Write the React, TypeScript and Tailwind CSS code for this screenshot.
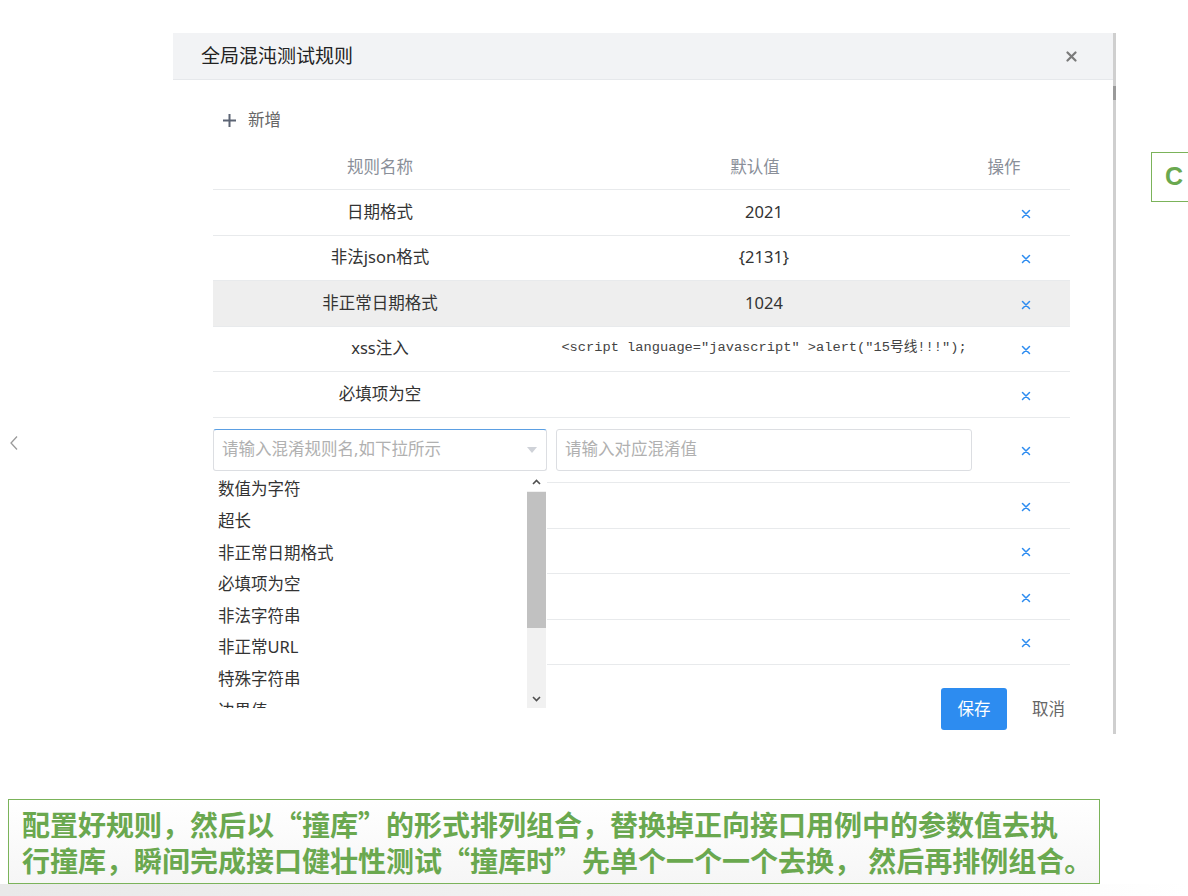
import React from "react";

const BlueX = () => (
  <svg width="10" height="10" viewBox="0 0 10 10">
    <path d="M1.5 1.5L8.5 8.5M8.5 1.5L1.5 8.5" stroke="#2d8cf0" strokeWidth="1.5" strokeLinecap="round" />
  </svg>
);

const rows = [
  { name: "日期格式", val: "2021" },
  { name: "非法json格式", val: "{2131}" },
  { name: "非正常日期格式", val: "1024", hl: true },
  { name: "xss注入", val: '<script language="javascript" >alert("15号线!!!");', mono: true },
  { name: "必填项为空", val: "" },
];

const options = ["数值为字符", "超长", "非正常日期格式", "必填项为空", "非法字符串", "非正常URL", "特殊字符串", "边界值"];

export default function App() {
  return (
    <div className="w-[1188px] h-[896px] overflow-hidden bg-white flex flex-col [font-family:'Noto_Sans','Noto_Sans_CJK_SC',sans-serif]">
      <div className="flex items-start pt-[33px] shrink-0">
        {/* left chevron column */}
        <div className="w-[173px] shrink-0 pt-[402px] pl-[9px]">
          <svg width="10" height="16" viewBox="0 0 10 16">
            <path d="M8 1.5L2 8L8 14.5" stroke="#9a9a9a" strokeWidth="1.3" fill="none" />
          </svg>
        </div>

        {/* modal */}
        <div className="w-[940px] shrink-0 flex flex-col">
          <div className="h-[47px] bg-[#f2f3f5] border-b border-[#e6e8eb] flex items-center justify-between pl-[28px] pr-[36px]">
            <span className="text-[19px] text-[#222]">全局混沌测试规则</span>
            <svg width="11" height="11" viewBox="0 0 11 11">
              <path d="M1.5 1.5L9.5 9.5M9.5 1.5L1.5 9.5" stroke="#7a7a7a" strokeWidth="2.2" strokeLinecap="round" />
            </svg>
          </div>
          <div className="pt-[28px] pl-[40px] pr-[43px] flex flex-col">
            <div className="h-[24px] flex items-center pl-[9px] gap-[11px] text-[16.5px] text-[#666]">
              <svg width="15" height="15" viewBox="0 0 15 15">
                <path d="M7.5 1V14M1 7.5H14" stroke="#5c6474" strokeWidth="2" />
              </svg>
              <span>新增</span>
            </div>
            <div className="mt-[13px] h-[44px] border-b border-[#e8eaec] flex items-center text-[16.5px] text-[#8a8f99] box-content">
              <div className="w-[334px] text-center">规则名称</div>
              <div className="w-[416px] text-center">默认值</div>
              <div className="w-[82px] text-center">操作</div>
            </div>
            <div className="relative">
              {rows.map((r, i) => (
                <div
                  key={i}
                  className={`h-[44.5px] box-content border-b border-[#e8eaec] flex items-center text-[16.5px] text-[#333] ${r.hl ? "bg-[#eeeeee]" : ""}`}
                >
                  <div className="w-[334px] text-center">{r.name}</div>
                  <div
                    className={`w-[434px] text-center whitespace-nowrap ${r.mono ? "[font-family:'Liberation_Mono','Noto_Sans_CJK_SC',monospace] text-[13.7px] text-[#444]" : ""}`}
                  >
                    {r.val}
                  </div>
                  <div className="flex-1 flex justify-center pt-[3px]">
                    <BlueX />
                  </div>
                </div>
              ))}
              {/* input row */}
              <div className="h-[64.5px] box-content border-b border-[#e8eaec] flex items-center">
                <div className="w-[334px] h-[42px] border border-[#dcdee2] border-t-[#5b9fe3] rounded-[3px] flex items-center justify-between pl-[8px] pr-[9px]">
                  <span className="text-[16.5px] text-[#b0b0b0]">请输入混淆规则名,如下拉所示</span>
                  <svg width="10" height="6" viewBox="0 0 10 6">
                    <path d="M0 0H10L5 6Z" fill="#cfd2d8" />
                  </svg>
                </div>
                <div className="w-[434px] px-[9px]">
                  <div className="h-[42px] border border-[#dcdee2] rounded-[3px] flex items-center pl-[8px] text-[16.5px] text-[#b0b0b0]">
                    请输入对应混淆值
                  </div>
                </div>
                <div className="flex-1 flex justify-center pt-[3px]">
                  <BlueX />
                </div>
              </div>
              {[0, 1, 2, 3].map((i) => (
                <div key={i} className="h-[44.5px] box-content border-b border-[#e8eaec] flex items-center">
                  <div className="w-[334px]" />
                  <div className="w-[434px]" />
                  <div className="flex-1 flex justify-center pt-[3px]">
                    <BlueX />
                  </div>
                </div>
              ))}

              {/* dropdown */}
              <div className="absolute left-0 top-[282px] w-[334px] h-[236px] bg-white flex overflow-hidden">
                <div className="flex-1 pt-[2px] pl-[5px] flex flex-col">
                  {options.map((o) => (
                    <div key={o} className="h-[31.6px] shrink-0 flex items-center text-[16.5px] text-[#333]">
                      {o}
                    </div>
                  ))}
                </div>
                <div className="w-[19px] shrink-0 flex flex-col bg-[#f1f1f1] mr-[1px]">
                  <div className="h-[19px] bg-white flex items-center justify-center">
                    <svg width="9" height="6" viewBox="0 0 9 6">
                      <path d="M1 5L4.5 1.5L8 5" stroke="#505050" strokeWidth="1.6" fill="none" />
                    </svg>
                  </div>
                  <div className="h-[136px] bg-[#c1c1c1] mt-[1px]" />
                  <div className="flex-1" />
                  <div className="h-[18px] flex items-center justify-center">
                    <svg width="9" height="6" viewBox="0 0 9 6">
                      <path d="M1 1L4.5 4.5L8 1" stroke="#505050" strokeWidth="1.6" fill="none" />
                    </svg>
                  </div>
                </div>
              </div>
            </div>
            <div className="pt-[23px] pb-[4px] flex justify-end items-center gap-[25px]">
              <div className="h-[42px] w-[66px] bg-[#2d8cf0] rounded-[3px] flex items-center justify-center text-white text-[16.5px]">
                保存
              </div>
              <div className="text-[16.5px] text-[#666] pr-[5px]">取消</div>
            </div>
          </div>
        </div>

        {/* outer scrollbar line */}
        <div className="w-[3px] shrink-0 self-stretch bg-[#cfcfcf] flex flex-col">
          <div className="h-[53px]" />
          <div className="h-[14px] bg-[#9a9a9a]" />
        </div>

        {/* C box */}
        <div className="ml-[35px] mt-[119px] shrink-0 w-[60px] h-[50px] border border-[#7bb35a] flex items-center pl-[13px]">
          <span className="[font-family:'Liberation_Sans',sans-serif] font-bold text-[25px] text-[#6aa84f]">C</span>
        </div>
      </div>

      {/* bottom note */}
      <div className="mt-[65px] ml-[8px] w-[1092px] h-[85px] shrink-0 border border-[#7bb35a] bg-gradient-to-b from-white to-[#f6f6f6] pt-[6px] pl-[13px]">
        <p className="[font-family:'Noto_Sans_CJK_SC',sans-serif] font-bold text-[28px] leading-[36px] text-[#6aa84f] whitespace-nowrap">
          配置好规则，然后以“撞库”的形式排列组合，替换掉正向接口用例中的参数值去执
          <br />
          行撞库，瞬间完成接口健壮性测试“撞库时”先单个一个一个去换， 然后再排例组合。
        </p>
      </div>
      <div className="flex-1 bg-gradient-to-r from-[#e9e9e9] via-[#f2f2f2] to-white" />
    </div>
  );
}
